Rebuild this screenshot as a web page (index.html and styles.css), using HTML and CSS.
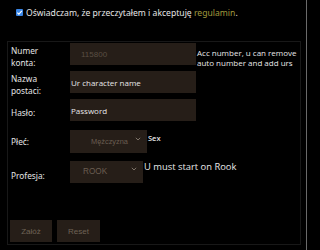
FILE: index.html
```html
<!DOCTYPE html>
<html lang="pl">
<head>
<meta charset="utf-8">
<link rel="stylesheet" href="styles.css">
</head>
<body>
<div class="page">
  <label class="agree">
    <input type="checkbox" class="agree-box" checked>
    <span>Oświadczam, że przeczytałem i akceptuję <a class="link" href="#">regulamin</a>.</span>
  </label>

  <form class="box">
    <div class="grid">
      <div class="lbl">Numer<br>konta:</div>
      <input class="field field-num" type="text" value="115800" disabled>
      <div class="note note-acc">Acc number, u can remove auto number and add urs</div>

      <div class="lbl">Nazwa<br>postaci:</div>
      <input class="field" type="text" value="Ur character name">
      <div></div>

      <div class="lbl">Hasło:</div>
      <input class="field" type="text" value="Password">
      <div></div>

      <div class="lbl">Płeć:</div>
      <div class="sel-wrap sel-sex">
        <select class="sel sel-m"><option>Mężczyzna</option></select>
        <svg class="chev" viewBox="0 0 6 4" width="6" height="4"><path d="M0.8 0.8 L3 3 L5.2 0.8" fill="none" stroke="#7d7368" stroke-width="1"/></svg>
      </div>
      <div class="note note-sex">Sex</div>

      <div class="lbl lbl-prof">Profesja:</div>
      <div class="sel-wrap sel-prof">
        <select class="sel sel-r"><option>ROOK</option></select>
        <svg class="chev" viewBox="0 0 6 4" width="6" height="4"><path d="M0.8 0.8 L3 3 L5.2 0.8" fill="none" stroke="#7d7368" stroke-width="1"/></svg>
      </div>
      <div class="note note-prof">U must start on Rook</div>
    </div>

    <div class="buttons">
      <button type="button" class="btn btn-z">Załóż</button>
      <button type="button" class="btn btn-r">Reset</button>
    </div>
  </form>
</div>
</body>
</html>
```

FILE: styles.css
```css
html, body {
  margin: 0;
  padding: 0;
  background: #000;
}
body {
  width: 306px;
  height: 250px;
  border-right: 1px solid #6a6a6a;
  overflow: hidden;
}
.page {
  font-family: "Noto Sans", "DejaVu Sans", sans-serif;
  color: #e8e8e8;
}
.agree {
  display: flex;
  align-items: center;
  gap: 3px;
  padding: 6px 0 0 16px;
  height: 13px;
  font-size: 8.6px;
  color: #e6e6e6;
}
.agree-box {
  appearance: none;
  -webkit-appearance: none;
  margin: 0;
  width: 7px;
  height: 7px;
  border-radius: 1px;
  background: #3a86e6 url("data:image/svg+xml;utf8,<svg xmlns='http://www.w3.org/2000/svg' viewBox='0 0 7 7'><path d='M1.3 3.6 L2.9 5.1 L5.8 1.8' fill='none' stroke='white' stroke-width='1.2'/></svg>") center / 7px 7px no-repeat;
  flex: none;
}
.link {
  color: #a19a3e;
  text-decoration: none;
}
.box {
  margin: 22px 0 0 7px;
  width: 292px;
  height: 202px;
  border: 1px solid #181818;
  display: flex;
  flex-direction: column;
}
.grid {
  display: grid;
  grid-template-columns: 58px 126px 1fr;
  column-gap: 1px;
  padding: 1px 0 0 3px;
}
.lbl {
  font-size: 8.3px;
  line-height: 12px;
  color: #e4e4e4;
  align-self: center;
}
.lbl-prof {
  margin-top: 9px;
}
.field {
  box-sizing: border-box;
  height: 22px;
  margin: 0 0 6px;
  border: none;
  outline: none;
  background: #261e18;
  color: #e8e8e8;
  font-family: "Open Sans", sans-serif;
  font-size: 8px;
  padding: 0 0 0 1px;
}
.field-num {
  padding-left: 11px;
  font-family: "Liberation Sans", Arial, sans-serif;
  font-size: 8px;
  color: #5a4e43;
}
.note {
  font-family: "Open Sans", sans-serif;
  font-size: 8px;
  line-height: 10px;
  color: #e8e8e8;
}
.note-acc {
  margin-top: 5px;
  padding-right: 2px;
}
.note-sex {
  margin-top: 6px;
  margin-left: -49px;
  font-weight: 600;
  font-size: 7.5px;
}
.note-prof {
  margin-top: 5px;
  margin-left: -53px;
  white-space: nowrap;
  font-size: 9.4px;
}
.sel-wrap {
  position: relative;
  height: 23px;
  margin-bottom: 7px;
}
.sel-sex { width: 77px; }
.sel-prof { width: 73px; height: 22px; }
.sel {
  appearance: none;
  -webkit-appearance: none;
  box-sizing: border-box;
  width: 100%;
  height: 100%;
  border: none;
  outline: none;
  background: #261e18;
  color: #6a5d51;
  font-family: "Liberation Sans", Arial, sans-serif;
  font-size: 7.4px;
}
.sel-m { padding-left: 21px; }
.sel-r { padding-left: 13px; font-size: 8.2px; }
.chev {
  position: absolute;
  right: 6px;
  top: 10px;
}
.buttons {
  display: flex;
  gap: 5px;
  margin-top: auto;
  padding: 0 0 2px 2px;
}
.btn {
  height: 22px;
  border: none;
  background: #261e18;
  color: #6f6356;
  font-family: "Liberation Sans", Arial, sans-serif;
  font-size: 8px;
  padding: 0;
}
.btn-z { width: 42px; }
.btn-r { width: 43px; }
```
